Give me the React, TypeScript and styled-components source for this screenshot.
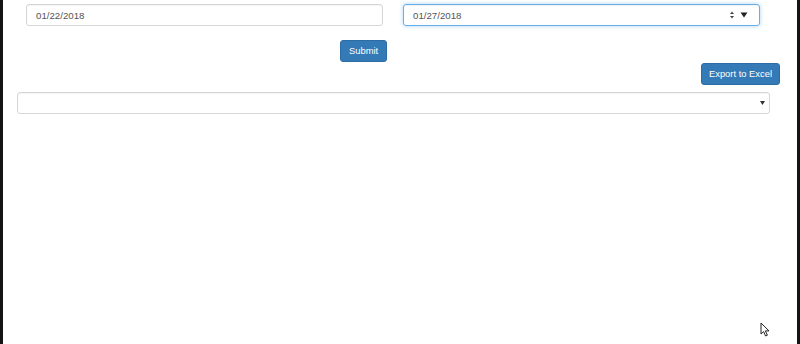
import React from "react";
import styled, { createGlobalStyle } from "styled-components";

const Global = createGlobalStyle`
  html, body { margin: 0; padding: 0; background: #fff; }
  body { font-family: "Liberation Sans", Arial, sans-serif; }
`;

const Frame = styled.div`
  position: relative;
  box-sizing: border-box;
  width: 800px;
  height: 344px;
  border-left: 3px solid #141414;
  border-right: 3px solid #141414;
  background: #fff;
  overflow: hidden;
`;

const DateRow = styled.div`
  display: flex;
  gap: 20px;
  padding: 4px 0 0 23px;
`;

const DateField = styled.div<{ $focus?: boolean }>`
  box-sizing: border-box;
  width: 357px;
  height: 22px;
  display: flex;
  align-items: center;
  padding: 0 10px 0 9px;
  border: 1px solid ${(p) => (p.$focus ? "#66afe9" : "#d6d6d6")};
  border-radius: 3px;
  box-shadow: ${(p) =>
    p.$focus
      ? "inset 0 1px 1px rgba(0,0,0,.06), 0 0 4px rgba(102,175,233,.55)"
      : "inset 0 1px 1px rgba(0,0,0,.05)"};
  font-size: 9.7px;
  color: #555;
`;

const DateText = styled.span`
  flex: 1;
`;

const Controls = styled.div`
  display: flex;
  align-items: center;
  gap: 5px;
  margin-right: 1px;
`;

const ButtonRow = styled.div<{ $end?: boolean; $top: number }>`
  display: flex;
  justify-content: ${(p) => (p.$end ? "flex-end" : "flex-start")};
  padding: ${(p) => (p.$end ? "0 17px 0 0" : "0 0 0 337px")};
  margin-top: ${(p) => p.$top}px;
`;

const BlueButton = styled.button<{ $pad: number }>`
  box-sizing: border-box;
  height: 22px;
  padding: 0 ${(p) => p.$pad}px;
  border: 1px solid #2e6da4;
  border-radius: 3px;
  background: #337ab7;
  color: #fff;
  font-family: "Liberation Sans", Arial, sans-serif;
  font-size: 9.4px;
  line-height: 20px;
`;

const SelectRow = styled.div`
  padding-left: 14px;
  margin-top: 7px;
`;

const SelectBox = styled.div`
  box-sizing: border-box;
  width: 753px;
  height: 22px;
  display: flex;
  align-items: center;
  justify-content: flex-end;
  padding-right: 4px;
  border: 1px solid #d6d6d6;
  border-radius: 3px;
  box-shadow: inset 0 1px 1px rgba(0,0,0,.05);
`;

const Pointer = styled.svg`
  position: absolute;
  left: 757px;
  top: 322px;
`;

export default function App() {
  return (
    <>
      <Global />
      <Frame>
        <DateRow>
          <DateField>
            <DateText>01/22/2018</DateText>
          </DateField>
          <DateField $focus>
            <DateText>01/27/2018</DateText>
            <Controls>
              <svg width="6" height="10" viewBox="0 0 6 10">
                <path d="M3 1.5 L5 4 H1 Z" fill="#444" />
                <path d="M3 8.5 L5 6 H1 Z" fill="#444" />
              </svg>
              <svg width="8" height="6" viewBox="0 0 8 6">
                <path d="M0.5 0.5 H7.5 L4 5.5 Z" fill="#222" />
              </svg>
            </Controls>
          </DateField>
        </DateRow>
        <ButtonRow $top={14}>
          <BlueButton $pad={8}>Submit</BlueButton>
        </ButtonRow>
        <ButtonRow $end $top={1}>
          <BlueButton $pad={7}>Export to Excel</BlueButton>
        </ButtonRow>
        <SelectRow>
          <SelectBox>
            <svg width="5" height="4" viewBox="0 0 5 4">
              <path d="M0 0 H5 L2.5 4 Z" fill="#333" />
            </svg>
          </SelectBox>
        </SelectRow>
        <Pointer width="10" height="15" viewBox="0 0 10 15">
          <path
            d="M1 1 L1 12 L3.6 9.6 L5.6 14 L7.4 13.2 L5.4 8.9 L9 8.9 Z"
            fill="#fff"
            stroke="#222"
            strokeWidth="1"
            strokeLinejoin="round"
          />
        </Pointer>
      </Frame>
    </>
  );
}
